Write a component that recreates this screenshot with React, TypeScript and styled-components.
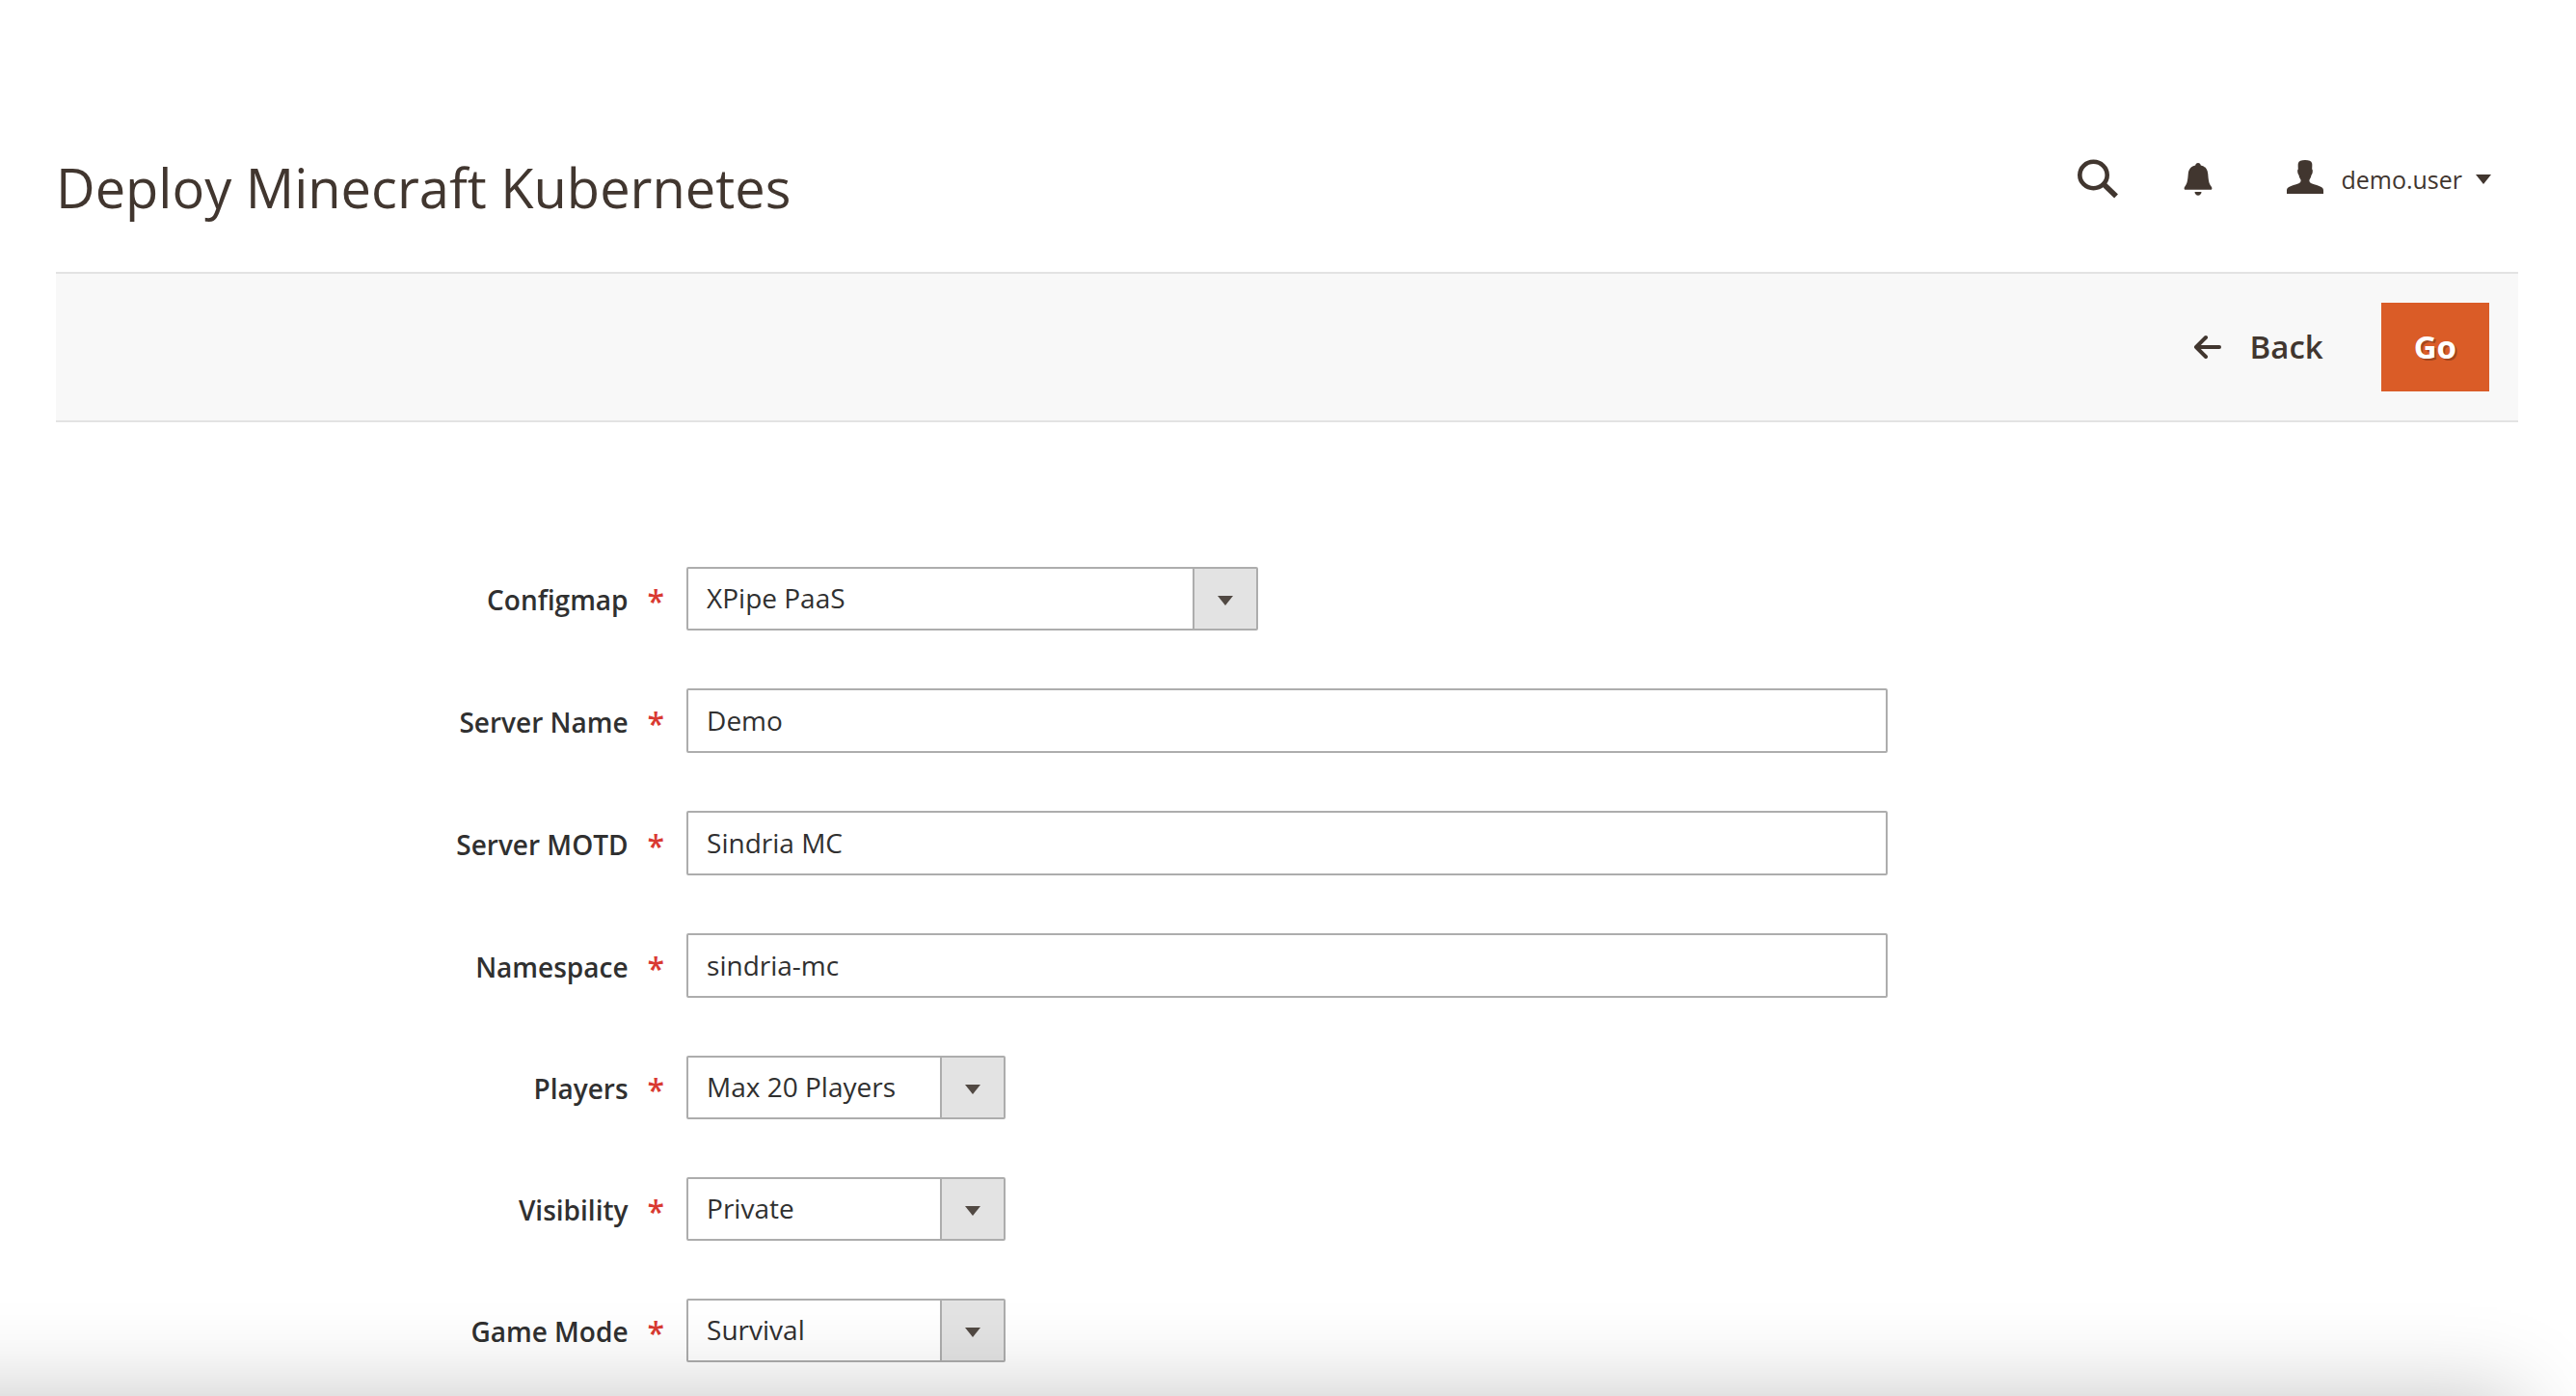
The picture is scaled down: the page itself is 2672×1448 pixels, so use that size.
import React from "react";
import styled, { createGlobalStyle } from "styled-components";

const ink = "#41362f";
const line = "#adadad";

const GlobalStyle = createGlobalStyle`
  *, *::before, *::after { box-sizing: border-box; }
  body {
    margin: 0;
    background: #fff;
    color: #303030;
    font-family: "Open Sans", "Noto Sans", sans-serif;
    font-size: 28px;
    line-height: 40px;
  }
`;

const Page = styled.div`
  min-height: 100vh;
  padding: 156px 60px 32px 58px;
`;

const Header = styled.header`
  display: flex;
  justify-content: space-between;
  align-items: flex-start;
  height: 126px;
`;

const Title = styled.h1`
  margin: 0;
  color: ${ink};
  font-size: 56px;
  font-weight: 400;
  line-height: 76px;
`;

const HeaderTools = styled.div`
  display: flex;
  align-items: center;
  height: 60px;
  padding-right: 28px;
`;

const IconButton = styled.button<{ $gap: number }>`
  display: flex;
  margin: 0 ${(p) => p.$gap}px 0 0;
  padding: 0;
  border: 0;
  background: none;
  color: ${ink};
`;

const UserButton = styled.button`
  display: flex;
  align-items: center;
  padding: 0;
  border: 0;
  background: none;
  color: ${ink};
  font: inherit;
  font-size: 25px;
`;

const UserName = styled.span`
  margin: 0 14px 0 18px;
`;

const Toolbar = styled.div`
  display: flex;
  justify-content: flex-end;
  align-items: center;
  gap: 60px;
  padding: 30px;
  border-top: 2px solid #e3e3e3;
  border-bottom: 2px solid #e3e3e3;
  background: #f8f8f8;
`;

const ActionButton = styled.button<{ $primary?: boolean }>`
  display: flex;
  align-items: center;
  gap: 28px;
  height: 92px;
  padding: 0 ${(p) => (p.$primary ? 34 : 0)}px;
  border: 0;
  background: ${(p) => (p.$primary ? "#da5c27" : "none")};
  color: ${(p) => (p.$primary ? "#fff" : ink)};
  font: inherit;
  font-size: 33px;
  font-weight: ${(p) => (p.$primary ? 700 : 600)};
  text-shadow: ${(p) => (p.$primary ? "2px 2px 0 rgba(0, 0, 0, 0.25)" : "none")};
`;

const Form = styled.form`
  display: flex;
  flex-direction: column;
  gap: 60px;
  padding-top: 150px;
`;

const Row = styled.div`
  display: grid;
  grid-template-columns: 21fr 40fr 21fr;
  align-items: center;
`;

const Label = styled.label`
  display: flex;
  align-items: center;
  justify-content: flex-end;
  gap: 20px;
  padding: 2px 23px 0 0;
  font-weight: 600;
`;

const Star = styled.span`
  padding-top: 4px;
  color: #d93a32;
  font-size: 32px;
`;

const TextInput = styled.input`
  width: 100%;
  height: 67px;
  padding: 0 19px 2px;
  border: 2px solid ${line};
  border-radius: 2px;
  background: #fff;
  color: inherit;
  font: inherit;
`;

const SelectBox = styled.div<{ $wide?: boolean }>`
  display: grid;
  width: ${(p) => (p.$wide ? 593 : 331)}px;
  height: 66px;
  border: 2px solid ${line};
  border-radius: 2px;
  background: #fff;
`;

const Select = styled.select`
  grid-area: 1 / 1;
  width: 100%;
  padding: 0 84px 2px 19px;
  border: 0;
  appearance: none;
  background: none;
  color: inherit;
  font: inherit;
`;

const SelectArrow = styled.span`
  grid-area: 1 / 1;
  justify-self: end;
  display: flex;
  align-items: center;
  justify-content: center;
  width: 66px;
  padding-top: 4px;
  border-left: 2px solid ${line};
  background: #e3e3e3;
  color: #514943;
  pointer-events: none;
`;

/* Shade cast by the panel docked under the viewport's lower edge. */
const BottomShade = styled.div`
  position: fixed;
  top: 100%;
  left: -200px;
  right: 58px;
  height: 300px;
  box-shadow: 0 0 88px rgba(0, 0, 0, 0.23);
  pointer-events: none;
`;

const Triangle = () => (
  <svg width="16" height="10" viewBox="0 0 16 10" fill="currentColor" aria-hidden="true">
    <path d="M0 0h16L8 10z" />
  </svg>
);

const SearchIcon = () => (
  <svg width="42" height="42" viewBox="0 0 42 42" fill="none" stroke="currentColor" aria-hidden="true">
    <ellipse cx="16.5" cy="16.5" rx="14.2" ry="13.7" strokeWidth="4.6" />
    <path d="M27 26L40 38.500" strokeWidth="5.6" />
  </svg>
);

const BellIcon = () => (
  <svg width="30" height="34" viewBox="0 0 30 34" fill="currentColor" aria-hidden="true">
    <path d="M15 0c1.700 0 2.500 1 2.800 2.400 4.200.9 6.900 3.600 7.400 8.600.6 6.500.9 10.200 3.300 13.200.6.800.9 1.400.9 2.200 0 .9-.5 1.300-1.400 1.300H2c-.9 0-1.400-.4-1.400-1.300 0-.8.3-1.400.9-2.200 2.400-3 2.700-6.700 3.300-13.200.5-5 3.200-7.700 7.400-8.600C12.500 1 13.300 0 15 0z" />
    <path d="M11.500 30h7c0 2-1.500 3.700-3.500 3.700s-3.500-1.700-3.500-3.700z" />
  </svg>
);

const UserIcon = () => (
  <svg width="38" height="40" viewBox="0 0 38 40" fill="currentColor" aria-hidden="true">
    <path d="M19 0c3.800 0 6.600 1 7.200 3.400.3 1.600 0 4 0 6.200.8.600.7 2 .5 3.200-.2 1.400-.7 2.400-1.300 2.900-.3 2-.9 3.300-1.800 4.500-.5 1.800 0 3 2 4.100 3.600 1.500 7.500 2.100 10.200 3.700 1.600.9 2.200 2.200 2.200 3.700V35H0v-3.300c0-1.500.6-2.800 2.200-3.700 2.700-1.600 6.600-2.200 10.200-3.700 2-1.100 2.500-2.300 2-4.100-.9-1.200-1.500-2.500-1.800-4.500-.6-.5-1.100-1.500-1.300-2.900-.2-1.200-.3-2.600.5-3.200 0-2.200-.3-4.600 0-6.200C12.400 1 15.200 0 19 0z" />
  </svg>
);

const BackIcon = () => (
  <svg width="30" height="26" viewBox="0 0 30 26" fill="none" stroke="currentColor" strokeWidth="4" strokeLinecap="round" strokeLinejoin="round" aria-hidden="true">
    <path d="M27 13H3M13 3L3 13l10 10" />
  </svg>
);

type Field = {
  id: string;
  label: string;
  value: string;
  kind: "text" | "select";
  wide?: boolean;
};

const fields: Field[] = [
  { id: "configmap", label: "Configmap", value: "XPipe PaaS", kind: "select", wide: true },
  { id: "server-name", label: "Server Name", value: "Demo", kind: "text" },
  { id: "server-motd", label: "Server MOTD", value: "Sindria MC", kind: "text" },
  { id: "namespace", label: "Namespace", value: "sindria-mc", kind: "text" },
  { id: "players", label: "Players", value: "Max 20 Players", kind: "select" },
  { id: "visibility", label: "Visibility", value: "Private", kind: "select" },
  { id: "game-mode", label: "Game Mode", value: "Survival", kind: "select" },
];

export default function App() {
  return (
    <>
      <GlobalStyle />
      <Page>
        <Header>
          <Title>Deploy Minecraft Kubernetes</Title>
          <HeaderTools>
            <IconButton type="button" aria-label="Search" $gap={68}>
              <SearchIcon />
            </IconButton>
            <IconButton type="button" aria-label="Notifications" $gap={77}>
              <BellIcon />
            </IconButton>
            <UserButton type="button">
              <UserIcon />
              <UserName>demo.user</UserName>
              <Triangle />
            </UserButton>
          </HeaderTools>
        </Header>
        <main>
          <Toolbar>
            <ActionButton type="button">
              <BackIcon />
              Back
            </ActionButton>
            <ActionButton type="submit" form="deploy" $primary>
              Go
            </ActionButton>
          </Toolbar>
          <Form id="deploy" onSubmit={(e) => e.preventDefault()}>
            {fields.map((f) => (
              <Row key={f.id}>
                <Label htmlFor={f.id}>
                  {f.label}
                  <Star>*</Star>
                </Label>
                {f.kind === "text" ? (
                  <TextInput id={f.id} type="text" defaultValue={f.value} />
                ) : (
                  <SelectBox $wide={f.wide}>
                    <Select id={f.id} defaultValue={f.value}>
                      <option>{f.value}</option>
                    </Select>
                    <SelectArrow>
                      <Triangle />
                    </SelectArrow>
                  </SelectBox>
                )}
              </Row>
            ))}
          </Form>
        </main>
      </Page>
      <BottomShade />
    </>
  );
}
